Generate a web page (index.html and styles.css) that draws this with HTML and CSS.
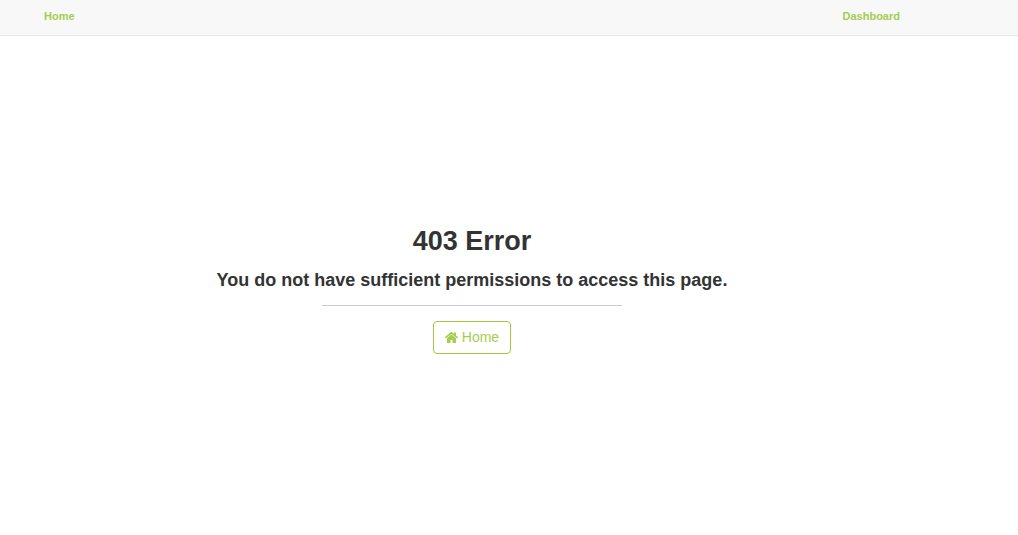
FILE: index.html
```html
<!DOCTYPE html>
<html lang="en">
<head>
<meta charset="utf-8">
<title>403 Error</title>
<link rel="stylesheet" href="styles.css">
</head>
<body>
<nav class="topbar">
  <a class="topbar-link" href="#">Home</a>
  <a class="topbar-link" href="#">Dashboard</a>
</nav>
<main class="error">
  <h1 class="error-title">403 Error</h1>
  <h2 class="error-text">You do not have sufficient permissions to access this page.</h2>
  <hr class="error-rule">
  <a class="home-button" href="#">
    <svg class="home-icon" viewBox="0 0 13 11" aria-hidden="true"><path fill="currentColor" d="M6.500 2.500L11 6.200V10.500Q11 11 10.500 11H7.500V8H5.500V11H2.500Q2 11 2 10.500V6.200ZM6.500 0Q6.900 0 7.200 0.300L9.100 1.900V0.500H11V3.500L12.900 5.100Q13.100 5.300 12.900 5.500L12.300 6.200Q12.100 6.400 11.900 6.200L6.500 1.900L1.100 6.200Q0.900 6.400 0.700 6.200L0.100 5.500Q-0.100 5.300 0.100 5.100L5.800 0.300Q6.100 0 6.500 0Z"/></svg>
    Home
  </a>
</main>
</body>
</html>
```
FILE: styles.css
```css
* {
  box-sizing: border-box;
}

body {
  margin: 0;
  min-height: 100vh;
  display: flex;
  flex-direction: column;
  background: #fff;
  color: #333;
  font-family: "Liberation Sans", Arial, sans-serif;
}

.topbar {
  display: flex;
  justify-content: space-between;
  height: 36px;
  padding: 9px 118px 0 44px;
  background: #f8f8f8;
  border-bottom: 1px solid #e7e7e7;
}

.topbar-link {
  color: #a5cd50;
  font-size: 11px;
  line-height: 14px;
  font-weight: bold;
  text-decoration: none;
}

.error {
  flex: 1;
  display: flex;
  flex-direction: column;
  align-items: center;
  justify-content: center;
  padding: 7px 74px 0 0;
}

.error-title {
  margin: 0 0 13px;
  font-size: 27px;
  line-height: 32px;
}

.error-text {
  margin: 0 0 15px;
  font-size: 18px;
  line-height: 20px;
}

.error-rule {
  width: 300px;
  margin: 0 0 15px;
  border: 0;
  border-top: 1px solid #ccc;
}

.home-button {
  display: flex;
  align-items: center;
  gap: 4px;
  height: 33px;
  padding: 0 11px;
  border: 1px solid #a2c93a;
  border-radius: 4px;
  color: #a5cd50;
  font-size: 14px;
  line-height: 20px;
  text-decoration: none;
}

.home-icon {
  width: 13px;
  height: 11px;
}
```
